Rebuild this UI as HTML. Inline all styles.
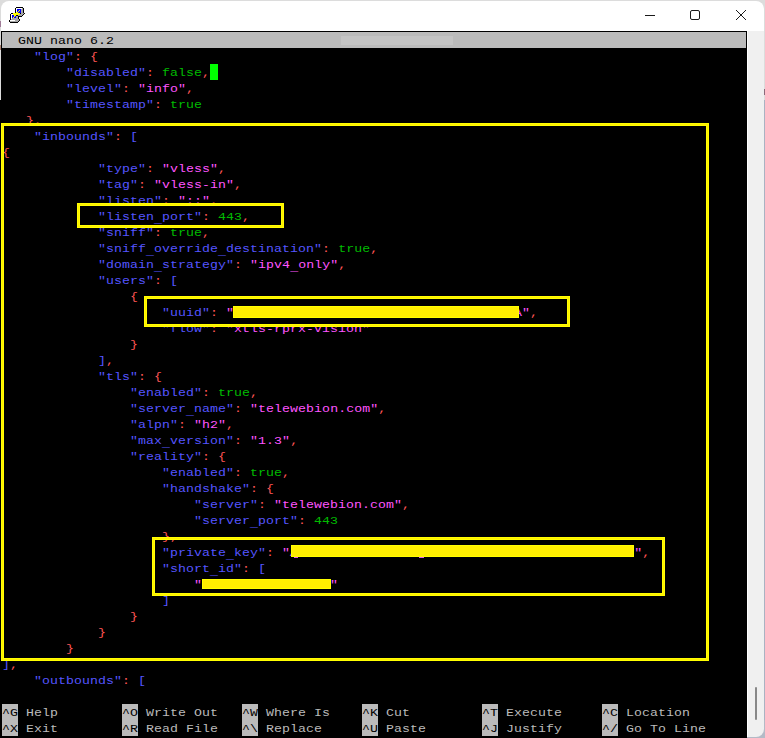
<!DOCTYPE html>
<html><head><meta charset="utf-8"><style>
html,body{margin:0;padding:0;}
body{width:765px;height:738px;position:relative;overflow:hidden;background:#dcdcdc;font-family:"Liberation Mono",monospace;}
.win{position:absolute;left:1px;top:1px;width:763px;height:700px;background:#fff;border-radius:8px 8px 0 0;}
.icon{position:absolute;left:9px;top:7px;}
.term{position:absolute;left:1px;top:31px;width:746px;height:720px;background:#000;}
.scr{position:absolute;left:747px;top:31px;width:16px;height:706px;background:#f0f0f0;border-left:1px solid #fff;border-bottom-right-radius:8px;}
.thumb{position:absolute;left:755px;top:687px;width:2px;height:33px;background:#888;border-radius:1px;}
.tb{position:absolute;left:2px;top:32px;width:744px;height:16px;background:#bbbbbb;}
.tbl{position:absolute;left:341px;top:36px;width:112px;height:9px;background:#c4c4c4;}
.txt{position:absolute;left:2px;top:33px;width:744px;height:704px;}
.r{position:absolute;left:0;height:16px;line-height:16px;font-size:11.5px;letter-spacing:0.05652px;transform:scaleX(1.15);transform-origin:0 0;white-space:pre;color:#bbbbbb;}
.r b{font-weight:normal;}
.u{font-style:normal;position:relative;top:3px;}
.k{background:#bbbbbb;color:#000;}
.lb{color:#bbbbbb;}
.box{position:absolute;}
.box::after{content:"";position:absolute;left:-2px;top:-2px;right:-2px;bottom:-2px;border:1px solid #ffee00;}
.kb{position:absolute;width:16px;height:16px;background:#bbbbbb;}
.bar{position:absolute;box-shadow:inset 0 0 0 1px #ffff00;}
.btn{position:absolute;}
</style></head><body>
<div style="position:absolute;left:0;top:100px;width:1px;height:638px;background:#000"></div>
<div style="position:absolute;left:764px;top:100px;width:1px;height:638px;background:#aab2c2"></div>
<div style="position:absolute;left:764px;top:89px;width:1px;height:6px;background:#8a6a7a"></div>
<div style="position:absolute;left:740px;top:720px;width:25px;height:18px;background:#b4bac6"></div>
<div class="win"></div>
<div style="position:absolute;left:0;top:21px;width:1px;height:6px;background:#a07c98"></div>
<div style="position:absolute;left:0;top:45px;width:1px;height:5px;background:#a88070"></div>
<svg class="icon" width="16" height="16" viewBox="0 0 16 16" shape-rendering="crispEdges"><rect x="7" y="0" width="1" height="1" fill="#000"/><rect x="8" y="0" width="1" height="1" fill="#000"/><rect x="9" y="0" width="1" height="1" fill="#000"/><rect x="10" y="0" width="1" height="1" fill="#000"/><rect x="11" y="0" width="1" height="1" fill="#000"/><rect x="12" y="0" width="1" height="1" fill="#000"/><rect x="13" y="0" width="1" height="1" fill="#000"/><rect x="6" y="1" width="1" height="1" fill="#000"/><rect x="7" y="1" width="1" height="1" fill="#fff"/><rect x="8" y="1" width="1" height="1" fill="#fff"/><rect x="9" y="1" width="1" height="1" fill="#fff"/><rect x="10" y="1" width="1" height="1" fill="#fff"/><rect x="11" y="1" width="1" height="1" fill="#fff"/><rect x="12" y="1" width="1" height="1" fill="#fff"/><rect x="13" y="1" width="1" height="1" fill="#a8a8a8"/><rect x="14" y="1" width="1" height="1" fill="#000"/><rect x="6" y="2" width="1" height="1" fill="#000"/><rect x="7" y="2" width="1" height="1" fill="#fff"/><rect x="8" y="2" width="1" height="1" fill="#0000ff"/><rect x="9" y="2" width="1" height="1" fill="#0000ff"/><rect x="10" y="2" width="1" height="1" fill="#0000ff"/><rect x="11" y="2" width="1" height="1" fill="#0000ff"/><rect x="12" y="2" width="1" height="1" fill="#a8a8a8"/><rect x="13" y="2" width="1" height="1" fill="#a8a8a8"/><rect x="14" y="2" width="1" height="1" fill="#000"/><rect x="6" y="3" width="1" height="1" fill="#000"/><rect x="7" y="3" width="1" height="1" fill="#fff"/><rect x="8" y="3" width="1" height="1" fill="#0000ff"/><rect x="9" y="3" width="1" height="1" fill="#0000ff"/><rect x="10" y="3" width="1" height="1" fill="#ffff00"/><rect x="11" y="3" width="1" height="1" fill="#0000ff"/><rect x="12" y="3" width="1" height="1" fill="#a8a8a8"/><rect x="13" y="3" width="1" height="1" fill="#a8a8a8"/><rect x="14" y="3" width="1" height="1" fill="#000"/><rect x="6" y="4" width="1" height="1" fill="#000"/><rect x="7" y="4" width="1" height="1" fill="#fff"/><rect x="8" y="4" width="1" height="1" fill="#0000ff"/><rect x="9" y="4" width="1" height="1" fill="#ffff00"/><rect x="10" y="4" width="1" height="1" fill="#0000ff"/><rect x="11" y="4" width="1" height="1" fill="#0000ff"/><rect x="12" y="4" width="1" height="1" fill="#a8a8a8"/><rect x="13" y="4" width="1" height="1" fill="#a8a8a8"/><rect x="14" y="4" width="1" height="1" fill="#000"/><rect x="6" y="5" width="1" height="1" fill="#000"/><rect x="7" y="5" width="1" height="1" fill="#ffff00"/><rect x="8" y="5" width="1" height="1" fill="#ffff00"/><rect x="9" y="5" width="1" height="1" fill="#0000ff"/><rect x="10" y="5" width="1" height="1" fill="#0000ff"/><rect x="11" y="5" width="1" height="1" fill="#0000ff"/><rect x="12" y="5" width="1" height="1" fill="#a8a8a8"/><rect x="13" y="5" width="1" height="1" fill="#a8a8a8"/><rect x="14" y="5" width="1" height="1" fill="#000"/><rect x="2" y="6" width="1" height="1" fill="#000"/><rect x="3" y="6" width="1" height="1" fill="#000"/><rect x="4" y="6" width="1" height="1" fill="#ffff00"/><rect x="5" y="6" width="1" height="1" fill="#ffff00"/><rect x="6" y="6" width="1" height="1" fill="#ffff00"/><rect x="7" y="6" width="1" height="1" fill="#ffff00"/><rect x="8" y="6" width="1" height="1" fill="#ffff00"/><rect x="9" y="6" width="1" height="1" fill="#ffff00"/><rect x="10" y="6" width="1" height="1" fill="#ffff00"/><rect x="11" y="6" width="1" height="1" fill="#000"/><rect x="12" y="6" width="1" height="1" fill="#a8a8a8"/><rect x="13" y="6" width="1" height="1" fill="#a8a8a8"/><rect x="14" y="6" width="1" height="1" fill="#a8a8a8"/><rect x="15" y="6" width="1" height="1" fill="#000"/><rect x="1" y="7" width="1" height="1" fill="#000"/><rect x="2" y="7" width="1" height="1" fill="#fff"/><rect x="3" y="7" width="1" height="1" fill="#fff"/><rect x="4" y="7" width="1" height="1" fill="#ffff00"/><rect x="5" y="7" width="1" height="1" fill="#ffff00"/><rect x="6" y="7" width="1" height="1" fill="#ffff00"/><rect x="7" y="7" width="1" height="1" fill="#ffff00"/><rect x="8" y="7" width="1" height="1" fill="#ffff00"/><rect x="9" y="7" width="1" height="1" fill="#ffff00"/><rect x="10" y="7" width="1" height="1" fill="#a8a8a8"/><rect x="11" y="7" width="1" height="1" fill="#a8a8a8"/><rect x="12" y="7" width="1" height="1" fill="#a8a8a8"/><rect x="13" y="7" width="1" height="1" fill="#a8a8a8"/><rect x="14" y="7" width="1" height="1" fill="#000"/><rect x="1" y="8" width="1" height="1" fill="#000"/><rect x="2" y="8" width="1" height="1" fill="#fff"/><rect x="3" y="8" width="1" height="1" fill="#0000ff"/><rect x="4" y="8" width="1" height="1" fill="#0000ff"/><rect x="5" y="8" width="1" height="1" fill="#ffff00"/><rect x="6" y="8" width="1" height="1" fill="#ffff00"/><rect x="7" y="8" width="1" height="1" fill="#000"/><rect x="8" y="8" width="1" height="1" fill="#000"/><rect x="9" y="8" width="1" height="1" fill="#a8a8a8"/><rect x="10" y="8" width="1" height="1" fill="#a8a8a8"/><rect x="11" y="8" width="1" height="1" fill="#a8a8a8"/><rect x="12" y="8" width="1" height="1" fill="#a8a8a8"/><rect x="13" y="8" width="1" height="1" fill="#000"/><rect x="1" y="9" width="1" height="1" fill="#000"/><rect x="2" y="9" width="1" height="1" fill="#fff"/><rect x="3" y="9" width="1" height="1" fill="#0000ff"/><rect x="4" y="9" width="1" height="1" fill="#0000ff"/><rect x="5" y="9" width="1" height="1" fill="#ffff00"/><rect x="6" y="9" width="1" height="1" fill="#0000ff"/><rect x="7" y="9" width="1" height="1" fill="#a8a8a8"/><rect x="8" y="9" width="1" height="1" fill="#a8a8a8"/><rect x="9" y="9" width="1" height="1" fill="#000"/><rect x="10" y="9" width="1" height="1" fill="#000"/><rect x="11" y="9" width="1" height="1" fill="#000"/><rect x="12" y="9" width="1" height="1" fill="#000"/><rect x="1" y="10" width="1" height="1" fill="#000"/><rect x="2" y="10" width="1" height="1" fill="#fff"/><rect x="3" y="10" width="1" height="1" fill="#0000ff"/><rect x="4" y="10" width="1" height="1" fill="#ffff00"/><rect x="5" y="10" width="1" height="1" fill="#0000ff"/><rect x="6" y="10" width="1" height="1" fill="#0000ff"/><rect x="7" y="10" width="1" height="1" fill="#a8a8a8"/><rect x="8" y="10" width="1" height="1" fill="#a8a8a8"/><rect x="9" y="10" width="1" height="1" fill="#000"/><rect x="1" y="11" width="1" height="1" fill="#000"/><rect x="2" y="11" width="1" height="1" fill="#fff"/><rect x="3" y="11" width="1" height="1" fill="#a8a8a8"/><rect x="4" y="11" width="1" height="1" fill="#a8a8a8"/><rect x="5" y="11" width="1" height="1" fill="#a8a8a8"/><rect x="6" y="11" width="1" height="1" fill="#a8a8a8"/><rect x="7" y="11" width="1" height="1" fill="#a8a8a8"/><rect x="8" y="11" width="1" height="1" fill="#a8a8a8"/><rect x="9" y="11" width="1" height="1" fill="#000"/><rect x="1" y="12" width="1" height="1" fill="#000"/><rect x="2" y="12" width="1" height="1" fill="#a8a8a8"/><rect x="3" y="12" width="1" height="1" fill="#a8a8a8"/><rect x="4" y="12" width="1" height="1" fill="#a8a8a8"/><rect x="5" y="12" width="1" height="1" fill="#a8a8a8"/><rect x="6" y="12" width="1" height="1" fill="#a8a8a8"/><rect x="7" y="12" width="1" height="1" fill="#a8a8a8"/><rect x="8" y="12" width="1" height="1" fill="#a8a8a8"/><rect x="9" y="12" width="1" height="1" fill="#a8a8a8"/><rect x="10" y="12" width="1" height="1" fill="#000"/><rect x="0" y="13" width="1" height="1" fill="#000"/><rect x="1" y="13" width="1" height="1" fill="#fff"/><rect x="2" y="13" width="1" height="1" fill="#fff"/><rect x="3" y="13" width="1" height="1" fill="#fff"/><rect x="4" y="13" width="1" height="1" fill="#fff"/><rect x="5" y="13" width="1" height="1" fill="#fff"/><rect x="6" y="13" width="1" height="1" fill="#a8a8a8"/><rect x="7" y="13" width="1" height="1" fill="#a8a8a8"/><rect x="8" y="13" width="1" height="1" fill="#a8a8a8"/><rect x="9" y="13" width="1" height="1" fill="#a8a8a8"/><rect x="10" y="13" width="1" height="1" fill="#000"/><rect x="0" y="14" width="1" height="1" fill="#000"/><rect x="1" y="14" width="1" height="1" fill="#a8a8a8"/><rect x="2" y="14" width="1" height="1" fill="#a8a8a8"/><rect x="3" y="14" width="1" height="1" fill="#a8a8a8"/><rect x="4" y="14" width="1" height="1" fill="#a8a8a8"/><rect x="5" y="14" width="1" height="1" fill="#a8a8a8"/><rect x="6" y="14" width="1" height="1" fill="#a8a8a8"/><rect x="7" y="14" width="1" height="1" fill="#a8a8a8"/><rect x="8" y="14" width="1" height="1" fill="#a8a8a8"/><rect x="9" y="14" width="1" height="1" fill="#000"/><rect x="1" y="15" width="1" height="1" fill="#000"/><rect x="2" y="15" width="1" height="1" fill="#000"/><rect x="3" y="15" width="1" height="1" fill="#000"/><rect x="4" y="15" width="1" height="1" fill="#000"/><rect x="5" y="15" width="1" height="1" fill="#000"/><rect x="6" y="15" width="1" height="1" fill="#000"/><rect x="7" y="15" width="1" height="1" fill="#000"/><rect x="8" y="15" width="1" height="1" fill="#000"/></svg>
<svg class="btn" style="left:640px;top:4px" width="120" height="24" viewBox="640 4 120 24">
<line x1="645" y1="15.5" x2="655" y2="15.5" stroke="#1a1a1a" stroke-width="1"/>
<rect x="690.5" y="10.5" width="9" height="9" rx="1.5" fill="none" stroke="#1a1a1a" stroke-width="1"/>
<line x1="736" y1="10" x2="746" y2="20" stroke="#1a1a1a" stroke-width="1"/>
<line x1="746" y1="10" x2="736" y2="20" stroke="#1a1a1a" stroke-width="1"/>
</svg>
<div class="term"></div>
<div class="scr"></div>
<div class="thumb"></div>
<div class="tb"></div>
<div class="tbl"></div>
<div style="position:absolute;left:210px;top:64px;width:8px;height:16px;background:#00ff00"></div>
<div class="kb" style="left:2px;top:704px"></div><div class="kb" style="left:122px;top:704px"></div><div class="kb" style="left:242px;top:704px"></div><div class="kb" style="left:362px;top:704px"></div><div class="kb" style="left:482px;top:704px"></div><div class="kb" style="left:602px;top:704px"></div><div class="kb" style="left:2px;top:720px"></div><div class="kb" style="left:122px;top:720px"></div><div class="kb" style="left:242px;top:720px"></div><div class="kb" style="left:362px;top:720px"></div><div class="kb" style="left:482px;top:720px"></div><div class="kb" style="left:602px;top:720px"></div>
<div class="txt">
<div class="r" style="top:0px;color:#000"><span>  GNU nano 6.2</span></div>
<div class="r" style="top:16px">    <b style="color:#5555ff">&quot;log&quot;</b><b style="color:#ff5555">:</b> <b style="color:#ff5555">{</b></div><div class="r" style="top:32px">        <b style="color:#5555ff">&quot;disabled&quot;</b><b style="color:#ff5555">:</b> <b style="color:#00bb00">false</b><b style="color:#ff5555">,</b></div><div class="r" style="top:48px">        <b style="color:#5555ff">&quot;level&quot;</b><b style="color:#ff5555">:</b> <b style="color:#ff55ff">&quot;info&quot;</b><b style="color:#ff5555">,</b></div><div class="r" style="top:64px">        <b style="color:#5555ff">&quot;timestamp&quot;</b><b style="color:#ff5555">:</b> <b style="color:#00bb00">true</b></div><div class="r" style="top:80px">   <b style="color:#ff5555">}</b><b style="color:#ff5555">,</b></div><div class="r" style="top:96px">    <b style="color:#5555ff">&quot;inbounds&quot;</b><b style="color:#ff5555">:</b> <b style="color:#5555ff">[</b></div><div class="r" style="top:112px"><b style="color:#ff5555">{</b></div><div class="r" style="top:128px">            <b style="color:#5555ff">&quot;type&quot;</b><b style="color:#ff5555">:</b> <b style="color:#ff55ff">&quot;vless&quot;</b><b style="color:#ff5555">,</b></div><div class="r" style="top:144px">            <b style="color:#5555ff">&quot;tag&quot;</b><b style="color:#ff5555">:</b> <b style="color:#ff55ff">&quot;vless-in&quot;</b><b style="color:#ff5555">,</b></div><div class="r" style="top:160px">            <b style="color:#5555ff">&quot;listen&quot;</b><b style="color:#ff5555">:</b> <b style="color:#ff55ff">&quot;::&quot;</b><b style="color:#ff5555">,</b></div><div class="r" style="top:176px">            <b style="color:#5555ff">&quot;listen<i class="u">_</i>port&quot;</b><b style="color:#ff5555">:</b> <b style="color:#00bb00">443</b><b style="color:#ff5555">,</b></div><div class="r" style="top:192px">            <b style="color:#5555ff">&quot;sniff&quot;</b><b style="color:#ff5555">:</b> <b style="color:#00bb00">true</b><b style="color:#ff5555">,</b></div><div class="r" style="top:208px">            <b style="color:#5555ff">&quot;sniff<i class="u">_</i>override<i class="u">_</i>destination&quot;</b><b style="color:#ff5555">:</b> <b style="color:#00bb00">true</b><b style="color:#ff5555">,</b></div><div class="r" style="top:224px">            <b style="color:#5555ff">&quot;domain<i class="u">_</i>strategy&quot;</b><b style="color:#ff5555">:</b> <b style="color:#ff55ff">&quot;ipv4<i class="u">_</i>only&quot;</b><b style="color:#ff5555">,</b></div><div class="r" style="top:240px">            <b style="color:#5555ff">&quot;users&quot;</b><b style="color:#ff5555">:</b> <b style="color:#5555ff">[</b></div><div class="r" style="top:256px">                <b style="color:#ff5555">{</b></div><div class="r" style="top:272px">                    <b style="color:#5555ff">&quot;uuid&quot;</b><b style="color:#ff5555">:</b> <b style="color:#ff55ff">&quot;0c1a2b3c-4d5e-6f70-8192-a3b4c5d6e7fA&quot;</b><b style="color:#ff5555">,</b></div><div class="r" style="top:288px">                    <b style="color:#5555ff">&quot;flow&quot;</b><b style="color:#ff5555">:</b> <b style="color:#ff55ff">&quot;xtls-rprx-vision&quot;</b></div><div class="r" style="top:304px">                <b style="color:#ff5555">}</b></div><div class="r" style="top:320px">            <b style="color:#5555ff">]</b><b style="color:#ff5555">,</b></div><div class="r" style="top:336px">            <b style="color:#5555ff">&quot;tls&quot;</b><b style="color:#ff5555">:</b> <b style="color:#ff5555">{</b></div><div class="r" style="top:352px">                <b style="color:#5555ff">&quot;enabled&quot;</b><b style="color:#ff5555">:</b> <b style="color:#00bb00">true</b><b style="color:#ff5555">,</b></div><div class="r" style="top:368px">                <b style="color:#5555ff">&quot;server<i class="u">_</i>name&quot;</b><b style="color:#ff5555">:</b> <b style="color:#ff55ff">&quot;telewebion.com&quot;</b><b style="color:#ff5555">,</b></div><div class="r" style="top:384px">                <b style="color:#5555ff">&quot;alpn&quot;</b><b style="color:#ff5555">:</b> <b style="color:#ff55ff">&quot;h2&quot;</b><b style="color:#ff5555">,</b></div><div class="r" style="top:400px">                <b style="color:#5555ff">&quot;max<i class="u">_</i>version&quot;</b><b style="color:#ff5555">:</b> <b style="color:#ff55ff">&quot;1.3&quot;</b><b style="color:#ff5555">,</b></div><div class="r" style="top:416px">                <b style="color:#5555ff">&quot;reality&quot;</b><b style="color:#ff5555">:</b> <b style="color:#ff5555">{</b></div><div class="r" style="top:432px">                    <b style="color:#5555ff">&quot;enabled&quot;</b><b style="color:#ff5555">:</b> <b style="color:#00bb00">true</b><b style="color:#ff5555">,</b></div><div class="r" style="top:448px">                    <b style="color:#5555ff">&quot;handshake&quot;</b><b style="color:#ff5555">:</b> <b style="color:#ff5555">{</b></div><div class="r" style="top:464px">                        <b style="color:#5555ff">&quot;server&quot;</b><b style="color:#ff5555">:</b> <b style="color:#ff55ff">&quot;telewebion.com&quot;</b><b style="color:#ff5555">,</b></div><div class="r" style="top:480px">                        <b style="color:#5555ff">&quot;server<i class="u">_</i>port&quot;</b><b style="color:#ff5555">:</b> <b style="color:#00bb00">443</b></div><div class="r" style="top:496px">                    <b style="color:#ff5555">}</b><b style="color:#ff5555">,</b></div><div class="r" style="top:512px">                    <b style="color:#5555ff">&quot;private<i class="u">_</i>key&quot;</b><b style="color:#ff5555">:</b> <b style="color:#ff55ff">&quot;ABCDEFGHIJKLMNOHIJKLMNOSTUVWXYZabcdefhiklmn&quot;</b><b style="color:#ff5555">,</b></div><div class="r" style="top:528px">                    <b style="color:#5555ff">&quot;short<i class="u">_</i>id&quot;</b><b style="color:#ff5555">:</b> <b style="color:#5555ff">[</b></div><div class="r" style="top:544px">                        <b style="color:#ff55ff">&quot;0123456789abcdef&quot;</b></div><div class="r" style="top:560px">                    <b style="color:#5555ff">]</b></div><div class="r" style="top:576px">                <b style="color:#ff5555">}</b></div><div class="r" style="top:592px">            <b style="color:#ff5555">}</b></div><div class="r" style="top:608px">        <b style="color:#ff5555">}</b></div><div class="r" style="top:624px"><b style="color:#5555ff">]</b><b style="color:#ff5555">,</b></div><div class="r" style="top:640px">    <b style="color:#5555ff">&quot;outbounds&quot;</b><b style="color:#ff5555">:</b> <b style="color:#5555ff">[</b></div><div class="r" style="top:656px"></div><div class="r" style="top:672px;left:0px"><span style="color:#000">^G</span> <span class="lb">Help</span></div><div class="r" style="top:672px;left:120px"><span style="color:#000">^O</span> <span class="lb">Write Out</span></div><div class="r" style="top:672px;left:240px"><span style="color:#000">^W</span> <span class="lb">Where Is</span></div><div class="r" style="top:672px;left:360px"><span style="color:#000">^K</span> <span class="lb">Cut</span></div><div class="r" style="top:672px;left:480px"><span style="color:#000">^T</span> <span class="lb">Execute</span></div><div class="r" style="top:672px;left:600px"><span style="color:#000">^C</span> <span class="lb">Location</span></div><div class="r" style="top:688px;left:0px"><span style="color:#000">^X</span> <span class="lb">Exit</span></div><div class="r" style="top:688px;left:120px"><span style="color:#000">^R</span> <span class="lb">Read File</span></div><div class="r" style="top:688px;left:240px"><span style="color:#000">^\</span> <span class="lb">Replace</span></div><div class="r" style="top:688px;left:360px"><span style="color:#000">^U</span> <span class="lb">Paste</span></div><div class="r" style="top:688px;left:480px"><span style="color:#000">^J</span> <span class="lb">Justify</span></div><div class="r" style="top:688px;left:600px"><span style="color:#000">^/</span> <span class="lb">Go To Line</span></div>
</div>
<div class="box" style="left:1px;top:123px;width:702px;height:532px;border:3px solid #ffff00"></div><div class="box" style="left:77px;top:203px;width:201px;height:19px;border:3px solid #ffff00"></div><div class="box" style="left:144px;top:296px;width:420px;height:25px;border:3px solid #ffff00"></div><div class="box" style="left:152px;top:537px;width:507px;height:53px;border:3px solid #ffff00"></div><div class="bar" style="left:233px;top:306px;width:286px;height:12px;background:#ffee00"></div><div class="bar" style="left:291px;top:545px;width:343px;height:12px;background:#ffee00"></div><div class="bar" style="left:202px;top:579px;width:129px;height:10px;background:#ffee00"></div><div style="position:absolute;left:294px;top:557px;width:4px;height:1px;background:#e060e8"></div><div style="position:absolute;left:419px;top:557px;width:5px;height:1px;background:#e060e8"></div>
</body></html>
